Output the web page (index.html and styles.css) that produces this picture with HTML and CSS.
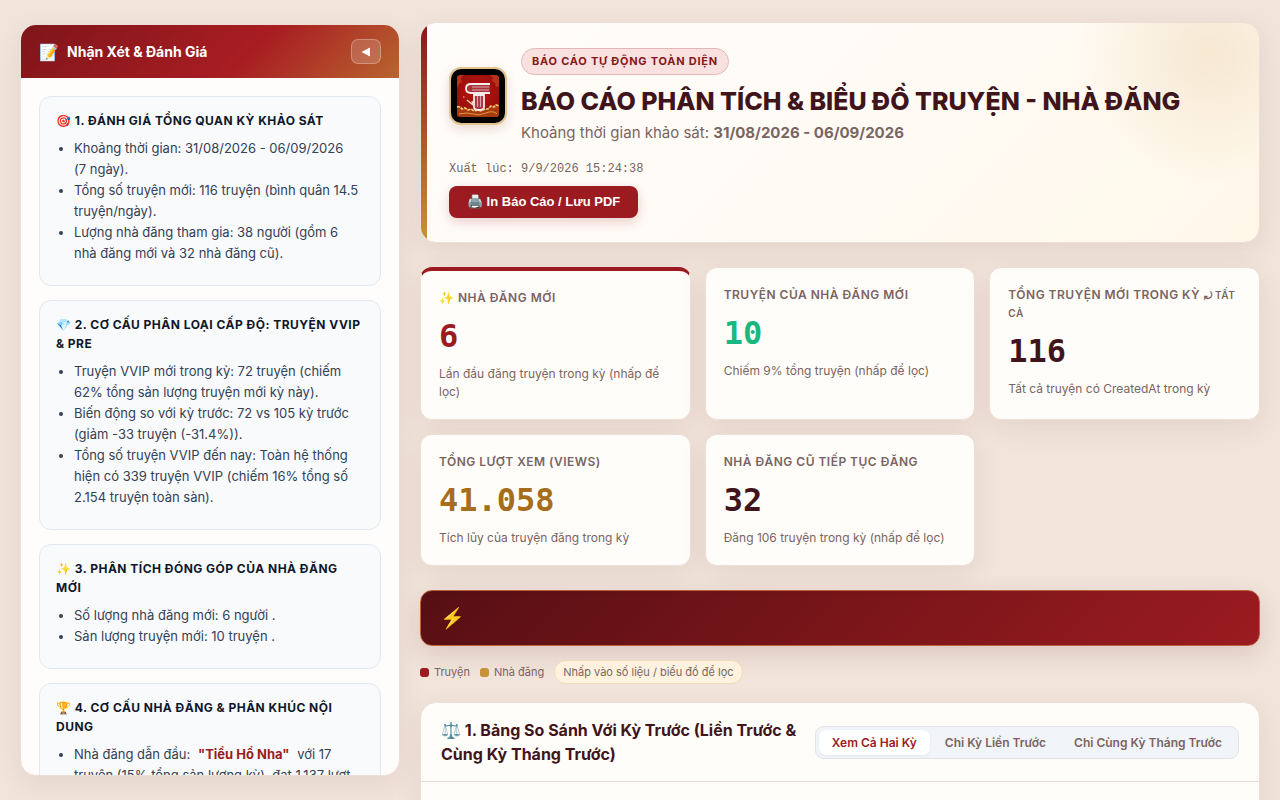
FILE: index.html
```html
<!DOCTYPE html>
<html lang="vi">
<head>
    <meta charset="UTF-8">
    <meta name="viewport" content="width=device-width, initial-scale=1.0">
    <title>Báo Cáo Phân Tích &amp; Biểu Đồ Truyện - Nhà Đăng</title>
    <link rel="stylesheet" href="styles.css">
</head>
<body>
    <div class="layout">
        <aside class="sidebar">
            <div class="sidebar-header">
                <h2><span class="sidebar-icon">📝</span> Nhận Xét &amp; Đánh Giá</h2>
                <button type="button" class="btn-toggle" aria-label="Thu gọn">
                    <svg width="10" height="10" viewBox="0 0 10 10"><path d="M9 0.5v9L0.5 5z" fill="#fff"/></svg>
                </button>
            </div>
            <div class="sidebar-body">
                <section class="note">
                    <h3>🎯 1. ĐÁNH GIÁ TỔNG QUAN KỲ KHẢO SÁT</h3>
                    <ul>
                        <li>Khoảng thời gian: 31/08/2026 - 06/09/2026 (7&nbsp;ngày).</li>
                        <li>Tổng số truyện mới: 116 truyện (bình quân 14.5 truyện/ngày).</li>
                        <li>Lượng nhà đăng tham gia: 38 người (gồm 6 nhà đăng mới và 32 nhà đăng cũ).</li>
                    </ul>
                </section>
                <section class="note">
                    <h3>💎 2. CƠ CẤU PHÂN LOẠI CẤP ĐỘ: TRUYỆN VVIP &amp; PRE</h3>
                    <ul>
                        <li>Truyện VVIP mới trong kỳ: 72 truyện (chiếm 62% tổng sản lượng truyện mới kỳ này).</li>
                        <li>Biến động so với kỳ trước: 72 vs 105 kỳ trước (giảm -33 truyện (-31.4%)).</li>
                        <li>Tổng số truyện VVIP đến nay: Toàn hệ thống hiện có 339 truyện VVIP (chiếm 16% tổng số 2.154 truyện toàn sàn).</li>
                    </ul>
                </section>
                <section class="note">
                    <h3>✨ 3. PHÂN TÍCH ĐÓNG GÓP CỦA NHÀ ĐĂNG MỚI</h3>
                    <ul>
                        <li>Số lượng nhà đăng mới: 6 người .</li>
                        <li>Sản lượng truyện mới: 10 truyện .</li>
                    </ul>
                </section>
                <section class="note">
                    <h3>🏆 4. CƠ CẤU NHÀ ĐĂNG &amp; PHÂN KHÚC NỘI DUNG</h3>
                    <ul>
                        <li>Nhà đăng dẫn đầu: <strong class="name">"Tiểu Hổ Nha"</strong> với 17 truyện (15% tổng sản lượng kỳ), đạt 1.137 lượt xem.</li>
                    </ul>
                </section>
            </div>
        </aside>

        <main class="content">
            <header class="report-header">
                <div class="brand">
                    <svg class="logo" viewBox="0 0 54 54" role="img" aria-label="Logo">
                        <defs>
                            <radialGradient id="logoBg" cx="50%" cy="40%" r="75%">
                                <stop offset="0" stop-color="#c0100f"/>
                                <stop offset="1" stop-color="#86120c"/>
                            </radialGradient>
                        </defs>
                        <rect width="54" height="54" fill="#000"/>
                        <rect x="6" y="6" width="42" height="42" rx="3" fill="url(#logoBg)"/>
                        <path d="M6 9q0-3 3-3h3l-2 4 1 3-3 2-2 4zM48 10q0-4-4-4h-5l3 3-1 3 3 2 1 4 3-1z" fill="#d9542c" opacity=".5"/>
                        <path d="M6 37q4-1 6 2 4-1 6 1 4-1 7 1 4-2 8 0 3-3 7-3 3-3 8-2v9q0 3-3 3H9q-3 0-3-3z" fill="#a63a12"/>
                        <path d="M6 38q3-1 5 2l3-1 3 2 3-1 3 2 4-1 3 1 4-2 3 0 3-3 3 1 2-2 3 1" fill="none" stroke="#f6cf78" stroke-width="1.6" stroke-dasharray="3 1"/>
                        <path d="M8 45q8-2 14 0t13-1 11 1" fill="none" stroke="#e09a3e" stroke-width="1"/>
                        <path d="M39 15H20q-5 0-5 4.500t5 4.500h19" fill="#a8343c" stroke="#f6eaea" stroke-width="1.800"/>
                        <path d="M38 18H21M38 21H21" fill="none" stroke="#d9a5aa" stroke-width="1.200"/>
                        <path d="M23 26v12q0 3 5 3t5-3V26z" fill="#a8343c" stroke="#f6eaea" stroke-width="1.800"/>
                        <path d="M26.500 27v11M29.500 27v11" fill="none" stroke="#d9a5aa" stroke-width="1.200"/>
                        <path d="M16 31l6 5-1-4M12 28h1.500" fill="none" stroke="#f4d8c8" stroke-width="1.200"/>
                    </svg>
                    <div class="brand-text">
                        <span class="badge">BÁO CÁO TỰ ĐỘNG TOÀN DIỆN</span>
                        <h1>BÁO CÁO PHÂN TÍCH &amp; BIỂU ĐỒ TRUYỆN - NHÀ ĐĂNG</h1>
                        <p>Khoảng thời gian khảo sát: <strong>31/08/2026 - 06/09/2026</strong></p>
                    </div>
                </div>
                <div class="meta">
                    <div class="export-time">Xuất lúc: 9/9/2026 15:24:38</div>
                    <button type="button" class="btn-print">🖨️ In Báo Cáo / Lưu PDF</button>
                </div>
            </header>

            <div class="kpi-grid">
                <div class="kpi active">
                    <div class="kpi-label">✨ NHÀ ĐĂNG MỚI</div>
                    <div class="kpi-value red">6</div>
                    <div class="kpi-sub">Lần đầu đăng truyện trong kỳ (nhấp để lọc)</div>
                </div>
                <div class="kpi">
                    <div class="kpi-label">TRUYỆN CỦA NHÀ ĐĂNG MỚI</div>
                    <div class="kpi-value green">10</div>
                    <div class="kpi-sub">Chiếm 9% tổng truyện (nhấp để lọc)</div>
                </div>
                <div class="kpi">
                    <div class="kpi-label">TỔNG TRUYỆN MỚI TRONG KỲ <span class="reset">⤾ TẤT CẢ</span></div>
                    <div class="kpi-value">116</div>
                    <div class="kpi-sub">Tất cả truyện có CreatedAt trong kỳ</div>
                </div>
                <div class="kpi">
                    <div class="kpi-label">TỔNG LƯỢT XEM (VIEWS)</div>
                    <div class="kpi-value gold">41.058</div>
                    <div class="kpi-sub">Tích lũy của truyện đăng trong kỳ</div>
                </div>
                <div class="kpi">
                    <div class="kpi-label">NHÀ ĐĂNG CŨ TIẾP TỤC ĐĂNG</div>
                    <div class="kpi-value">32</div>
                    <div class="kpi-sub">Đăng 106 truyện trong kỳ (nhấp để lọc)</div>
                </div>
            </div>

            <div class="banner">⚡</div>

            <div class="legend">
                <span class="legend-item"><i class="dot dot-red"></i>Truyện</span>
                <span class="legend-item"><i class="dot dot-gold"></i>Nhà đăng</span>
                <span class="hint">Nhấp vào số liệu / biểu đồ để lọc</span>
            </div>

            <section class="panel">
                <div class="panel-header">
                    <h2>⚖️ 1. Bảng So Sánh Với Kỳ Trước (Liền Trước &amp; Cùng Kỳ Tháng Trước)</h2>
                    <div class="tabs">
                        <button type="button" class="tab active">Xem Cả Hai Kỳ</button>
                        <button type="button" class="tab">Chỉ Kỳ Liền Trước</button>
                        <button type="button" class="tab">Chỉ Cùng Kỳ Tháng Trước</button>
                    </div>
                </div>
                <div class="panel-body"></div>
            </section>
        </main>
    </div>
</body>
</html>
```

FILE: styles.css
```css
* {
    box-sizing: border-box;
}
body {
    margin: 0;
    padding: 22px 20px;
    background: #f0e4db;
    color: #3f151b;
    font-family: Inter, "Noto Sans", sans-serif;
}
h1, h2, h3, p, ul {
    margin: 0;
}
button {
    cursor: pointer;
}
.layout {
    display: flex;
    align-items: flex-start;
    gap: 20px;
}

/* Sidebar */
.sidebar {
    flex: 0 0 380px;
    height: calc(100vh - 48px);
    margin-top: 2px;
    display: flex;
    flex-direction: column;
    overflow: hidden;
    background: #fffdfb;
    border: 1px solid #ecdfd6;
    border-radius: 16px;
    box-shadow: 0 8px 28px rgba(110, 30, 20, 0.08);
}
.sidebar-header {
    display: flex;
    align-items: center;
    justify-content: space-between;
    flex-shrink: 0;
    padding: 14px 18px;
    background: linear-gradient(135deg, #7f151a 0%, #a81d22 60%, #b8652f 100%);
}
.sidebar-header h2 {
    display: flex;
    align-items: center;
    gap: 8px;
    color: #fff;
    font-size: 14px;
    line-height: 20px;
    font-weight: 700;
}
.sidebar-icon {
    font-size: 16px;
}
.btn-toggle {
    display: flex;
    align-items: center;
    justify-content: center;
    width: 30px;
    height: 25px;
    padding: 0;
    background: rgba(255, 255, 255, 0.16);
    border: 1px solid rgba(255, 255, 255, 0.28);
    border-radius: 7px;
}
.sidebar-body {
    flex: 1;
    min-height: 0;
    overflow: hidden;
    padding: 18px;
}
.note {
    margin-bottom: 14px;
    padding: 14px 16px;
    background: #f8fafc;
    border: 1px solid #e2e8f0;
    border-radius: 12px;
}
.note h3 {
    margin-bottom: 8px;
    color: #0f172a;
    font-size: 12px;
    line-height: 19px;
    font-weight: 700;
    letter-spacing: 0.04em;
}
.note ul {
    margin-bottom: 7px;
    padding-left: 18px;
    color: #334155;
    font-size: 13px;
    line-height: 21px;
}
.name {
    margin: 0 4px;
    color: #9b1c20;
}

/* Report header */
.content {
    flex: 1;
    min-width: 0;
}
.report-header {
    position: relative;
    overflow: hidden;
    margin-bottom: 24px;
    padding: 25px 28px 24px;
    background:
        radial-gradient(circle 130px at calc(100% - 50px) 30px, rgba(200, 146, 58, 0.16), rgba(200, 146, 58, 0)),
        linear-gradient(135deg, #fffdfb 0%, #fffaf3 60%, #fff7e8 100%);
    border: 1px solid #ecdfd6;
    border-radius: 16px;
    box-shadow: 0 8px 28px rgba(110, 30, 20, 0.08);
}
.report-header::before {
    content: "";
    position: absolute;
    left: 0;
    top: 0;
    bottom: 0;
    width: 6px;
    background: linear-gradient(180deg, #86181c, #c8923a);
}
.brand {
    display: flex;
    align-items: center;
    gap: 14px;
}
.logo {
    flex-shrink: 0;
    width: 58px;
    height: 58px;
    border: 2px solid #e2c48c;
    border-radius: 12px;
    box-shadow: 0 4px 12px rgba(110, 30, 20, 0.16);
}
.badge {
    display: inline-block;
    padding: 4px 10px;
    background: #f9e1df;
    border: 1px solid #e3b7b8;
    border-radius: 14px;
    color: #86181c;
    font-size: 11px;
    line-height: 17px;
    font-weight: 700;
    letter-spacing: 0.07em;
}
.brand-text h1 {
    margin-top: 8px;
    font-size: 25px;
    line-height: 36px;
    font-weight: 800;
}
.brand-text p {
    margin-top: 3px;
    color: #7a6461;
    font-size: 15px;
    line-height: 22px;
}
.meta {
    display: inline-flex;
    flex-direction: column;
    gap: 8px;
    margin-top: 16px;
}
.export-time {
    color: #7a6461;
    font-family: "Liberation Mono", monospace;
    font-size: 12px;
    line-height: 18px;
}
.btn-print {
    align-self: flex-start;
    padding: 0 18px;
    background: #9b1b20;
    border: 0;
    border-radius: 8px;
    box-shadow: 0 4px 12px rgba(155, 27, 32, 0.2);
    color: #fff;
    font-family: "Liberation Sans", Arial, sans-serif;
    font-size: 13px;
    line-height: 32px;
    font-weight: 700;
}

/* KPI cards */
.kpi-grid {
    display: grid;
    grid-template-columns: repeat(3, 1fr);
    gap: 14px;
    margin-bottom: 24px;
}
.kpi {
    padding: 18px;
    background: #fffdfa;
    border: 1px solid #ecdfd6;
    border-radius: 12px;
    box-shadow: 0 8px 28px rgba(110, 30, 20, 0.08);
}
.kpi.active {
    border-top: 4px solid #9b1b20;
}
.kpi-label {
    color: #7a6461;
    font-size: 12px;
    line-height: 18px;
    font-weight: 600;
    letter-spacing: 0.04em;
}
.reset {
    font-size: 10px;
}
.kpi-value {
    margin: 8px 0;
    font-family: "DejaVu Sans Mono", monospace;
    font-size: 32px;
    line-height: 42px;
    font-weight: 700;
}
.red {
    color: #9b1b20;
}
.green {
    color: #18b981;
}
.gold {
    color: #a66d1b;
}
.kpi-sub {
    color: #7a6461;
    font-size: 12px;
    line-height: 18px;
}

.banner {
    height: 56px;
    margin-bottom: 14px;
    padding: 0 19px;
    background: linear-gradient(135deg, #560f13 0%, #9b1b20 100%);
    border: 1px solid #b9643f;
    border-radius: 12px;
    box-shadow: 0 8px 24px rgba(110, 30, 20, 0.14);
    font-size: 20px;
    line-height: 54px;
}

.legend {
    display: flex;
    align-items: center;
    gap: 10px;
    margin-bottom: 18px;
    color: #7a6461;
    font-size: 11px;
    line-height: 16px;
}
.legend-item {
    display: flex;
    align-items: center;
    gap: 5px;
}
.dot {
    width: 9px;
    height: 9px;
    border-radius: 3px;
}
.dot-red {
    background: #9b1b20;
}
.dot-gold {
    background: #c8923a;
}
.hint {
    padding: 3px 8px;
    background: #fff3df;
    border: 1px solid #f0dcb8;
    border-radius: 12px;
}

/* Comparison panel */
.panel {
    background: #fffdfa;
    border: 1px solid #ecdfd6;
    border-radius: 16px;
    box-shadow: 0 8px 28px rgba(110, 30, 20, 0.08);
}
.panel-header {
    display: flex;
    align-items: center;
    justify-content: space-between;
    padding: 15px 20px;
    border-bottom: 1px solid #e8dad6;
}
.panel-header h2 {
    font-size: 16px;
    line-height: 24px;
    font-weight: 700;
}
.tabs {
    display: flex;
    flex-shrink: 0;
    gap: 2px;
    padding: 3px;
    background: #f1f5f9;
    border: 1px solid #e2e2e8;
    border-radius: 9px;
}
.tab {
    padding: 0 13px;
    background: none;
    border: 0;
    border-radius: 7px;
    color: #7a6461;
    font-family: inherit;
    font-size: 12px;
    line-height: 25px;
    font-weight: 600;
}
.tab.active {
    background: #fff;
    box-shadow: 0 1px 3px rgba(0, 0, 0, 0.06);
    color: #9b1b20;
}
.panel-body {
    min-height: 60px;
}
```
